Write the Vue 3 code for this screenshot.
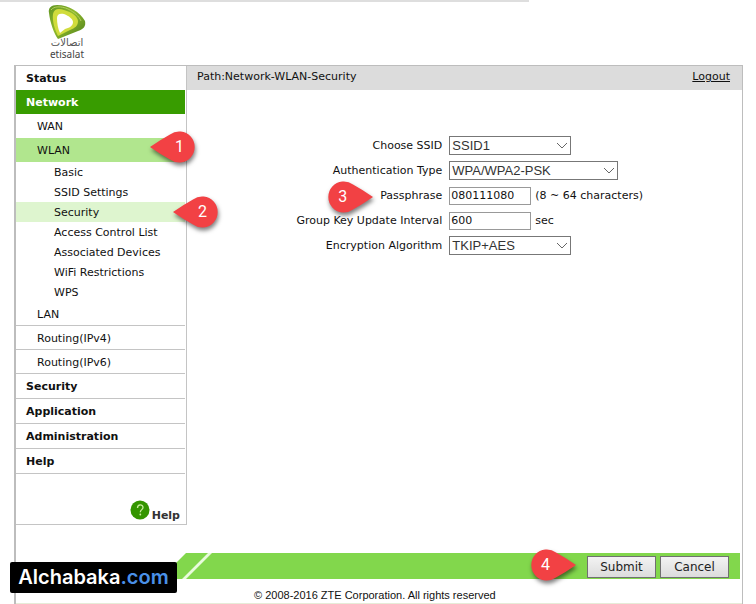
<script setup>
import { ref } from "vue";

const ssid = ref("SSID1");
const authType = ref("WPA/WPA2-PSK");
const passphrase = ref("080111080");
const interval = ref("600");
const algorithm = ref("TKIP+AES");

const wlanItems = ["Basic", "SSID Settings", "Security", "Access Control List", "Associated Devices", "WiFi Restrictions", "WPS"];
const mainItems = ["Security", "Application", "Administration", "Help"];
</script>

<template>
  <div class="page">
    <header class="top">
      <div class="logo">
        <svg class="logo-mark" viewBox="0 0 38 34" role="img" aria-label="etisalat logo">
          <defs>
            <linearGradient id="leaf" x1="0" y1="0" x2="1" y2="1">
              <stop offset="0" stop-color="#5f9422" />
              <stop offset="0.45" stop-color="#8fb92c" />
              <stop offset="1" stop-color="#4d7f1c" />
            </linearGradient>
          </defs>
          <path d="M1 8C0 3 3 0 9 0c12 0 23 7 28 16 1 5-1 8-7 10L10 34C6 29 2 17 1 8z" fill="url(#leaf)" />
          <path d="M5 9c1-5 5-6 11-4 8 2 14 7 14 11 0 5-3 7-8 9l-12 6C7 25 4 16 5 9z" fill="#d0dc3c" />
          <path d="M9 13c0-4 3-5 7-4 5 2 9 5 9 8 0 4-4 6-8 7l-5 4c-2-4-3-10-3-15z" fill="#fff" />
          <path d="M3 5c3-4 10-4 17-1 6 3 11 7 13 12" fill="none" stroke="#b4cd5c" stroke-width="1" />
        </svg>
        <span class="logo-ar" lang="ar">اتصالات</span>
        <span class="logo-en">etisalat</span>
      </div>
    </header>

    <div class="frame">
      <div class="body">
        <nav class="sidebar">
          <ul class="menu">
            <li><a href="#" class="main">Status</a></li>
            <li>
              <a href="#" class="main active">Network</a>
              <ul>
                <li><a href="#" class="sub">WAN</a></li>
                <li>
                  <a href="#" class="sub open">
                    WLAN
                    <span class="callout wlan-callout">
                      <svg viewBox="0 0 47 32"><path d="M0 16Q10 9 20 3.500A15.500 15.500 0 1 1 20 28.500Q10 23 0 16z" /></svg>
                      <span>1</span>
                    </span>
                  </a>
                  <ul>
                    <li v-for="item in wlanItems" :key="item">
                      <a href="#" class="leaf" :class="{ current: item === 'Security' }">
                        {{ item }}
                        <span v-if="item === 'Security'" class="callout security-callout">
                          <svg viewBox="0 0 47 32"><path d="M0 16Q10 9 20 3.500A15.500 15.500 0 1 1 20 28.500Q10 23 0 16z" /></svg>
                          <span>2</span>
                        </span>
                      </a>
                    </li>
                  </ul>
                </li>
                <li><a href="#" class="sub line">LAN</a></li>
                <li><a href="#" class="sub line">Routing(IPv4)</a></li>
                <li><a href="#" class="sub line">Routing(IPv6)</a></li>
              </ul>
            </li>
            <li v-for="item in mainItems" :key="item"><a href="#" class="main line">{{ item }}</a></li>
          </ul>
          <a href="#" class="help">
            <svg viewBox="0 0 20 20" aria-hidden="true">
              <circle cx="10" cy="10" r="9.500" fill="#349500" />
              <path d="M7.500 8c0-4 5.500-4 5.500-.5 0 2-2.700 2.300-2.700 4.700" fill="none" stroke="#c9ef9d" stroke-width="1.300" />
              <circle cx="10.300" cy="14.500" r="0.900" fill="#c9ef9d" />
            </svg>
            <span>Help</span>
          </a>
        </nav>

        <main class="content">
          <div class="path">
            <span>Path:Network-WLAN-Security</span>
            <a href="#">Logout</a>
          </div>
          <form id="security-form" class="form" @submit.prevent>
            <label for="ssid">Choose SSID</label>
            <div class="field">
              <div class="select">
                <select id="ssid" v-model="ssid">
                  <option>SSID1</option>
                </select>
                <svg viewBox="0 0 12 7"><path d="M1 1l5 5 5-5" /></svg>
              </div>
            </div>

            <label for="auth">Authentication Type</label>
            <div class="field">
              <div class="select wide">
                <select id="auth" v-model="authType">
                  <option>WPA/WPA2-PSK</option>
                </select>
                <svg viewBox="0 0 12 7"><path d="M1 1l5 5 5-5" /></svg>
              </div>
            </div>

            <label for="passphrase" class="marked">
              <span class="callout right passphrase-callout">
                <svg viewBox="0 0 47 32"><path d="M47 16Q37 9 27 3.500A15.500 15.500 0 1 0 27 28.500Q37 23 47 16z" /></svg>
                <span>3</span>
              </span>
              Passphrase
            </label>
            <div class="field">
              <input id="passphrase" v-model="passphrase" type="text" />
              <span>(8 ~ 64 characters)</span>
            </div>

            <label for="interval">Group Key Update Interval</label>
            <div class="field">
              <input id="interval" v-model="interval" type="text" />
              <span>sec</span>
            </div>

            <label for="algorithm">Encryption Algorithm</label>
            <div class="field">
              <div class="select">
                <select id="algorithm" v-model="algorithm">
                  <option>TKIP+AES</option>
                </select>
                <svg viewBox="0 0 12 7"><path d="M1 1l5 5 5-5" /></svg>
              </div>
            </div>
          </form>
        </main>
      </div>

      <div class="actions">
        <svg class="slant" viewBox="0 0 52 26" aria-hidden="true">
          <path d="M0 0h26L0 26z" fill="#fff" />
          <path d="M48 0h4L26 26h-4z" fill="#e9fbdc" />
        </svg>
        <div class="buttons">
          <span class="callout right submit-callout">
            <svg viewBox="0 0 47 32"><path d="M47 16Q37 9 27 3.500A15.500 15.500 0 1 0 27 28.500Q37 23 47 16z" /></svg>
            <span>4</span>
          </span>
          <button type="submit" form="security-form">Submit</button>
          <button type="button">Cancel</button>
        </div>
      </div>
      <footer class="copyright">© 2008-2016 ZTE Corporation. All rights reserved</footer>
    </div>

    <div class="watermark">Alchabaka<span>.com</span></div>
  </div>
</template>

<style>
body {
  margin: 0;
  background: #fff;
}
</style>

<style scoped>
.page {
  position: relative;
  font-family: "DejaVu Sans", Verdana, sans-serif;
  font-size: 11px;
  color: #111;
}

.page * {
  box-sizing: border-box;
}

a {
  color: inherit;
  text-decoration: none;
}

ul {
  list-style: none;
  margin: 0;
  padding: 0;
}

.top {
  height: 65px;
  padding-left: 48px;
}

.top::before {
  content: "";
  position: absolute;
  top: 0;
  left: 0;
  width: 70%;
  height: 2px;
  background: #dedede;
}

.logo {
  display: flex;
  flex-direction: column;
  align-items: center;
  width: 38px;
  padding-top: 5px;
}

.logo-mark {
  width: 38px;
  height: 34px;
}

.logo-ar {
  font-size: 10px;
  line-height: 8px;
  color: #555;
}

.logo-en {
  font-family: "Noto Sans", sans-serif;
  font-size: 10px;
  line-height: 14px;
  color: #444;
}

.frame {
  margin: 0 13px 0 14px;
  border: 1px solid #bdbdbd;
  border-left-width: 2px;
  border-bottom: 0;
}

.body {
  display: flex;
}

.sidebar {
  display: flex;
  flex-direction: column;
  justify-content: space-between;
  flex: none;
  width: 171px;
  min-height: 459px;
  border-right: 1px solid #c4c4c4;
  border-bottom: 1px solid #c4c4c4;
}

.menu {
  padding-right: 1px;
}

.main,
.sub,
.leaf {
  display: block;
  position: relative;
  height: 24px;
  line-height: 26px;
}

.main {
  padding-left: 10px;
  font-weight: bold;
}

.main.line {
  height: 25px;
}

.line {
  border-bottom: 1px solid #c4c4c4;
}

.active {
  background: #389c00;
  color: #fff;
}

.sub {
  padding-left: 21px;
}

.open {
  background: #b1e68e;
}

.leaf {
  height: 20px;
  padding-left: 38px;
  line-height: 22px;
}

.current {
  background: #def5cf;
}

.help {
  display: flex;
  align-items: flex-end;
  align-self: flex-end;
  gap: 2px;
  padding: 0 6px 2px 0;
  font-weight: bold;
  color: #333;
}

.help svg {
  width: 20px;
  height: 20px;
  margin-bottom: 2px;
}

.content {
  flex: 1;
}

.path {
  display: flex;
  justify-content: space-between;
  height: 24px;
  padding: 0 12px 0 10px;
  line-height: 22px;
  background: #dcdcdc;
}

.path a {
  text-decoration: underline;
}

.form {
  display: grid;
  grid-template-columns: 46% 1fr;
  grid-auto-rows: 25px;
  column-gap: 7px;
  align-items: center;
  padding-top: 43px;
}

.form label {
  text-align: right;
}

.marked {
  position: relative;
}

.field {
  display: flex;
  align-items: center;
  gap: 4px;
}

.field input {
  width: 82px;
  height: 18px;
  padding: 0 1px;
  border: 1px solid #999;
  font: inherit;
  color: inherit;
}

.select {
  position: relative;
  width: 122px;
}

.select.wide {
  width: 169px;
}

.select select {
  display: block;
  width: 100%;
  height: 19px;
  padding: 0 2px;
  appearance: none;
  border: 1px solid #777;
  border-radius: 0;
  background: #fff;
  font-family: "Liberation Sans", Arial, sans-serif;
  font-size: 13px;
  color: #333;
}

.select svg {
  position: absolute;
  top: 6px;
  right: 3px;
  width: 12px;
  height: 7px;
  fill: none;
  stroke: #666;
  pointer-events: none;
}

.actions {
  display: flex;
  justify-content: space-between;
  height: 26px;
  margin: 28px 2px 0 144px;
  background: #82d74c;
}

.slant {
  width: 52px;
  height: 26px;
}

.buttons {
  display: flex;
  position: relative;
  gap: 4px;
  padding: 3px 11px 0 0;
}

.buttons button {
  width: 69px;
  height: 22px;
  padding: 0;
  border: 1px solid #707070;
  background: linear-gradient(#f3f3f3, #dcdcdc);
  font: inherit;
  font-size: 12px;
  color: #222;
}

.copyright {
  height: 25px;
  padding-left: 238px;
  border-bottom: 1px solid #e6ecd8;
  font-family: "Liberation Sans", Arial, sans-serif;
  line-height: 32px;
}

.callout {
  position: absolute;
  z-index: 1;
  width: 47px;
  height: 32px;
}

.callout svg {
  display: block;
  width: 47px;
  height: 32px;
  fill: #f24144;
  overflow: visible;
  filter: drop-shadow(1px 3px 2px rgba(0, 0, 0, 0.5));
}

.callout span {
  position: absolute;
  inset: 0 0 0 12px;
  font-family: Roboto, sans-serif;
  font-size: 16px;
  font-weight: normal;
  line-height: 32px;
  text-align: center;
  color: #fff;
}

.callout.right span {
  inset: 0 14px 0 0;
}

.wlan-callout {
  top: -7px;
  right: -12px;
}

.security-callout {
  top: -6px;
  right: -35px;
}

.passphrase-callout {
  top: -8px;
  right: 69px;
}

.submit-callout {
  top: -4px;
  right: 164px;
}

.watermark {
  position: absolute;
  z-index: 2;
  left: 10px;
  bottom: 11px;
  width: 167px;
  height: 31px;
  border-radius: 2px;
  background: #000;
  font-family: Inter, sans-serif;
  font-size: 20px;
  font-weight: 600;
  line-height: 31px;
  text-align: center;
  color: #fff;
}

.watermark span {
  color: #4a90e8;
}
</style>
